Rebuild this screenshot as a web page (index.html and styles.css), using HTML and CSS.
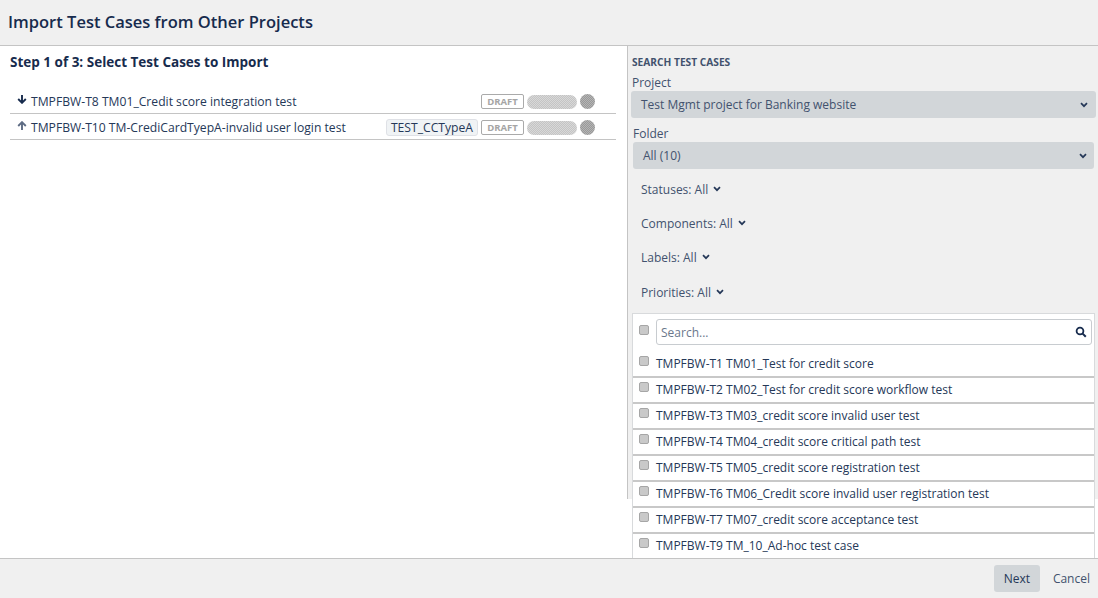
FILE: index.html
```html
<!DOCTYPE html>
<html lang="en">
<head>
<meta charset="utf-8">
<title>Import Test Cases from Other Projects</title>
<link rel="stylesheet" href="styles.css">
</head>
<body>
<div class="dialog">
  <header class="head"><h1>Import Test Cases from Other Projects</h1></header>
  <div class="content">
    <main class="left">
      <h2>Step 1 of 3: Select Test Cases to Import</h2>
      <div class="selected">
        <div class="sel-row">
          <svg class="arrow" viewBox="0 0 10 9"><path d="M5 0V7.6M1.2 4L5 7.8L8.8 4" fill="none" stroke="#172b4d" stroke-width="1.9"/></svg>
          <span class="sel-name">TMPFBW-T8 TM01_Credit score integration test</span>
          <span class="draft">DRAFT</span><span class="pill"></span><span class="dot"></span>
        </div>
        <div class="sel-row">
          <svg class="arrow" viewBox="0 0 10 9"><path d="M5 9V1.4M1.2 5L5 1.2L8.8 5" fill="none" stroke="#5e6c84" stroke-width="1.9"/></svg>
          <span class="sel-name">TMPFBW-T10 TM-CrediCardTyepA-invalid user login test</span>
          <span class="tag">TEST_CCTypeA</span><span class="draft">DRAFT</span><span class="pill"></span><span class="dot"></span>
        </div>
      </div>
    </main>
    <aside class="side">
      <h3>SEARCH TEST CASES</h3>
      <div class="field-label">Project</div>
      <div class="select project-select"><span>Test Mgmt project for Banking website</span>
        <svg class="chev" viewBox="0 0 8 6"><path d="M1 1.2L4 4.2L7 1.2" fill="none" stroke="#253858" stroke-width="1.7"/></svg></div>
      <div class="field-label folder">Folder</div>
      <div class="select folder-select"><span>All (10)</span>
        <svg class="chev" viewBox="0 0 8 6"><path d="M1 1.2L4 4.2L7 1.2" fill="none" stroke="#253858" stroke-width="1.7"/></svg></div>
      <div class="filters">
        <div class="filter">Statuses: All <svg class="chev" viewBox="0 0 8 6"><path d="M1 1.2L4 4.2L7 1.2" fill="none" stroke="#253858" stroke-width="1.7"/></svg></div>
        <div class="filter">Components: All <svg class="chev" viewBox="0 0 8 6"><path d="M1 1.2L4 4.2L7 1.2" fill="none" stroke="#253858" stroke-width="1.7"/></svg></div>
        <div class="filter">Labels: All <svg class="chev" viewBox="0 0 8 6"><path d="M1 1.2L4 4.2L7 1.2" fill="none" stroke="#253858" stroke-width="1.7"/></svg></div>
        <div class="filter">Priorities: All <svg class="chev" viewBox="0 0 8 6"><path d="M1 1.2L4 4.2L7 1.2" fill="none" stroke="#253858" stroke-width="1.7"/></svg></div>
      </div>
      <div class="results">
        <div class="search-row">
          <span class="check"></span>
          <div class="search"><span>Search...</span>
            <svg class="glass" viewBox="0 0 12 12"><circle cx="5" cy="5" r="3.4" fill="none" stroke="#172b4d" stroke-width="1.8"/><path d="M7.6 7.6L10.8 10.8" stroke="#172b4d" stroke-width="2"/></svg></div>
        </div>
        <div class="item"><span class="check"></span>TMPFBW-T1 TM01_Test for credit score</div>
        <div class="item"><span class="check"></span>TMPFBW-T2 TM02_Test for credit score workflow test</div>
        <div class="item"><span class="check"></span>TMPFBW-T3 TM03_credit score invalid user test</div>
        <div class="item"><span class="check"></span>TMPFBW-T4 TM04_credit score critical path test</div>
        <div class="item"><span class="check"></span>TMPFBW-T5 TM05_credit score registration test</div>
        <div class="item"><span class="check"></span>TMPFBW-T6 TM06_Credit score invalid user registration test</div>
        <div class="item"><span class="check"></span>TMPFBW-T7 TM07_credit score acceptance test</div>
        <div class="item"><span class="check"></span>TMPFBW-T9 TM_10_Ad-hoc test case</div>
      </div>
    </aside>
  </div>
  <footer class="foot">
    <button class="next">Next</button>
    <button class="cancel">Cancel</button>
  </footer>
</div>
</body>
</html>
```
FILE: styles.css
```css
* { box-sizing: border-box; }
html, body { margin: 0; height: 100%; background: #fff; }
body { font-family: "Open Sans", "Noto Sans", sans-serif; font-size: 12px; color: #253858; overflow: hidden; }
.dialog { display: flex; flex-direction: column; height: 598px; width: 1098px; }
.head { height: 46px; flex: none; background: #f0f0f0; border-bottom: 1px solid #c4c4c4; padding: 0 8px; display: flex; align-items: center; }
.head h1 { margin: 0 0 1px; font-size: 16.5px; font-weight: 600; color: #172b4d; line-height: 20px; }
.content { flex: 1; display: flex; align-items: flex-start; overflow: hidden; min-height: 0; }
.left { width: 627px; flex: none; padding: 8px 11px 0 10px; }
.left h2 { margin: 0; font-size: 13.5px; font-weight: 700; line-height: 16px; color: #172b4d; }
.selected { margin-top: 18px; }
.sel-row { display: flex; align-items: center; height: 26px; border-bottom: 1px solid #c4c4c4; padding: 2px 21px 0 7px; font-size: 12.15px; }
.arrow { width: 10px; height: 9px; flex: none; margin: -5px 4px 0 0; }
.sel-name { flex: 1; white-space: nowrap; color: #253858; }
.tag { background: #f0f3f5; border: 1px solid #dfe1e6; border-radius: 3px; height: 17px; line-height: 15px; padding: 0 4px; margin-right: 3px; color: #253858; white-space: nowrap; }
.draft { width: 43px; height: 15px; border: 1px solid #aaa; border-radius: 2px; font-size: 9.5px; font-weight: 700; line-height: 13px; text-align: center; color: #a5a5a5; margin-right: 3px; }
.pill { width: 50px; height: 14px; border-radius: 7px; background: repeating-conic-gradient(#c4c4c4 0 25%, #d8d8d8 0 50%) 0 0 / 2px 2px; margin-right: 3px; }
.dot { width: 15px; height: 15px; border-radius: 50%; background: repeating-conic-gradient(#999 0 25%, #b4b4b4 0 50%) 0 0 / 2px 2px; }
.side { width: 471px; height: 453px; flex: none; background: #f0f0f0; border-left: 1px solid #c4c4c4; padding: 9px 0 0 3px; }
.side h3 { margin: 0 0 0 1px; font-size: 10.2px; font-weight: 700; line-height: 14px; color: #42526e; }
.field-label { margin: 5px 0 0 1px; line-height: 17px; color: #42526e; }
.field-label.folder { margin: 7px 0 0 2px; }
.select { height: 27px; background: #d2d6d9; border-radius: 3px; display: flex; align-items: center; justify-content: space-between; color: #42526e; }
.project-select { width: 465px; padding: 0 8px 0 10px; }
.folder-select { width: 461px; margin-left: 2px; padding: 0 7px 0 10px; }
.chev { width: 8px; height: 6px; flex: none; }
.filters { padding: 7px 0 0 10px; }
.filter { height: 34.2px; line-height: 17px; padding-top: 5px; color: #42526e; display: flex; align-items: flex-start; gap: 4px; }
.filter .chev { margin-top: 5px; margin-left: 1px; }
.results { margin-left: 1px; width: 463px; background: #fff; border-top: 1px solid #d8dadc; border-left: 1px solid #d8dadc; border-right: 1px solid #d8dadc; }
.search-row { display: flex; align-items: center; height: 38px; padding: 0 2px 2px 6px; }
.search { flex: 1; height: 26px; margin-left: 7px; border: 1px solid #c8ccd0; border-radius: 3px; display: flex; align-items: center; justify-content: space-between; padding: 2px 4px 0; color: #6b778c; }
.glass { width: 12px; height: 12px; margin-top: -2px; }
.check { width: 10px; height: 10px; flex: none; background: #c9c9c9; border: 1px solid #a6a6a6; border-radius: 2px; margin: -6px 7px 0 0; }
.search-row .check { margin: -3px 0 0 0; }
.item { height: 26px; display: flex; align-items: center; padding-left: 6px; border-bottom: 2px solid #c8c8c8; color: #253858; white-space: nowrap; }
.foot { height: 40px; flex: none; background: #f0f0f0; border-top: 1px solid #c4c4c4; display: flex; align-items: center; justify-content: flex-end; gap: 13px; padding: 0 8px 0 0; }
.foot button { font: inherit; border: 0; cursor: pointer; }
.next { width: 46px; height: 27px; background: #d2d6d9; border-radius: 3px; color: #253858; padding: 0; }
.cancel { background: none; color: #42526e; padding: 0; }
```
